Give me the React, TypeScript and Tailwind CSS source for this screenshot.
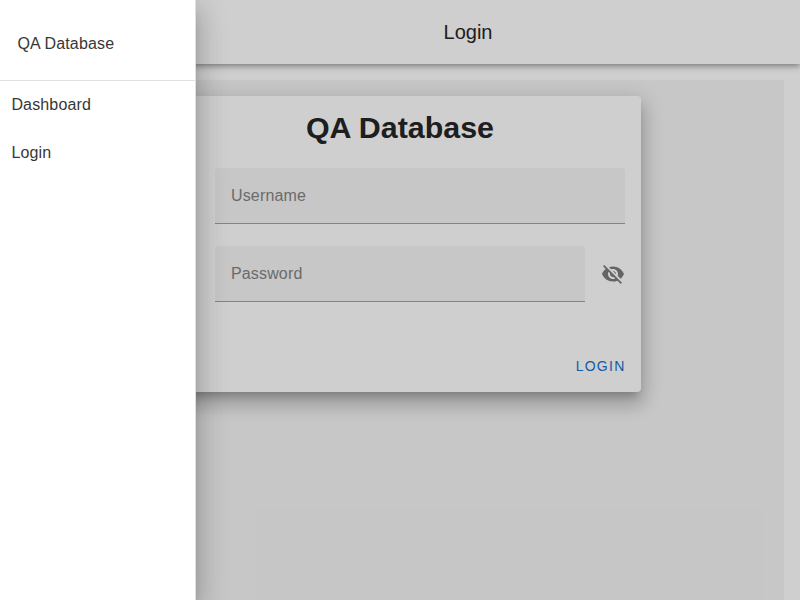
import React from "react";

function Field({ label, className }: { label: string; className: string }) {
  return (
    <div className={`flex h-14 items-center rounded-t border-b border-[#a3a3a3] bg-[#f5f5f5] px-4 text-base tracking-[0.15px] text-[#848484] ${className}`}>
      <span>{label}</span>
    </div>
  );
}

function VisibilityOff() {
  return (
    <svg viewBox="0 0 24 24" className="h-6 w-6 fill-[#7c7c7c]">
      <path d="M12 7c2.76 0 5 2.24 5 5 0 .65-.13 1.26-.36 1.83l2.92 2.92c1.51-1.26 2.7-2.89 3.43-4.75-1.73-4.39-6-7.5-11-7.5-1.4 0-2.74.25-3.98.7l2.16 2.16C10.74 7.13 11.35 7 12 7zM2 4.27l2.28 2.28.46.46C3.08 8.3 1.78 10.02 1 12c1.73 4.39 6 7.5 11 7.5 1.55 0 3.03-.3 4.38-.84l.42.42L19.73 22 21 20.73 3.27 3 2 4.27zM7.53 9.8l1.55 1.55c-.05.21-.08.43-.08.65 0 1.66 1.34 3 3 3 .22 0 .44-.03.65-.08l1.55 1.55c-.67.33-1.41.53-2.2.53-2.76 0-5-2.24-5-5 0-.79.2-1.53.53-2.2zm4.31-.78l3.15 3.15.02-.16c0-1.66-1.34-3-3-3l-.17.01z" />
    </svg>
  );
}

export default function App() {
  return (
    <div className="relative h-[600px] w-[800px] overflow-hidden bg-white font-['Liberation_Sans',Arial,sans-serif] text-[#262626]">
      <div className="flex h-full flex-col">
        <header className="z-10 flex h-16 shrink-0 items-center justify-center bg-white pl-[136px] shadow-[0_2px_4px_-1px_rgba(0,0,0,0.2),0_4px_5px_0_rgba(0,0,0,0.14),0_1px_10px_0_rgba(0,0,0,0.12)]">
          <h6 className="text-xl leading-8">Login</h6>
        </header>
        <main className="mx-4 mt-4 flex flex-1 justify-center bg-[#f5f5f5] pt-4">
          <section className="flex h-[296px] w-[482px] flex-col rounded bg-white shadow-[0_7px_8px_-4px_rgba(0,0,0,0.2),0_12px_17px_2px_rgba(0,0,0,0.14),0_5px_22px_4px_rgba(0,0,0,0.12)]">
            <h1 className="h-[72px] pt-[11px] text-center text-[30.4px] leading-10 font-bold">QA Database</h1>
            <div className="flex flex-col gap-[22px] pr-4 pl-14">
              <Field label="Username" className="w-full" />
              <div className="flex items-center gap-4">
                <Field label="Password" className="flex-1" />
                <VisibilityOff />
              </div>
            </div>
            <div className="mt-auto flex h-[52px] items-center justify-end pr-[15.5px] text-sm tracking-[1.25px] text-[#1a6fcc]">LOGIN</div>
          </section>
        </main>
      </div>
      <div className="absolute inset-0 z-20 bg-black/19" />
      <aside className="absolute inset-y-0 left-0 z-30 w-[196px] border-r border-[#e0e0e0] bg-white text-[#373737] shadow-[0_8px_10px_-5px_rgba(0,0,0,0.2),0_16px_24px_2px_rgba(0,0,0,0.14),0_6px_30px_5px_rgba(0,0,0,0.12)]">
        <div className="flex h-[81px] items-center border-b border-[#e0e0e0] pt-[7px] pl-[17.4px] text-base tracking-[0.15px]">
          <span>QA Database</span>
        </div>
        <nav className="flex flex-col text-base tracking-[0.15px]">
          <a className="flex h-12 items-center pl-[11.4px]">Dashboard</a>
          <a className="flex h-12 items-center pl-[11.4px]">Login</a>
        </nav>
      </aside>
    </div>
  );
}
